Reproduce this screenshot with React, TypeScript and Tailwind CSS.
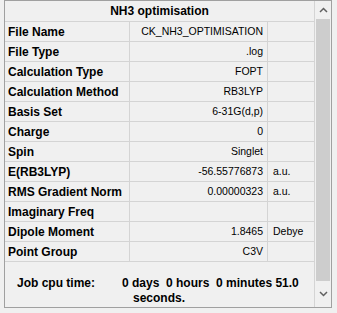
import React from "react";

const rows: [string, string, string][] = [
  ["File Name", "CK_NH3_OPTIMISATION", ""],
  ["File Type", ".log", ""],
  ["Calculation Type", "FOPT", ""],
  ["Calculation Method", "RB3LYP", ""],
  ["Basis Set", "6-31G(d,p)", ""],
  ["Charge", "0", ""],
  ["Spin", "Singlet", ""],
  ["E(RB3LYP)", "-56.55776873", "a.u."],
  ["RMS Gradient Norm", "0.00000323", "a.u."],
  ["Imaginary Freq", "", ""],
  ["Dipole Moment", "1.8465", "Debye"],
  ["Point Group", "C3V", ""],
];

export default function App() {
  return (
    <div
      className="w-[337px] h-[313px] bg-[#f0f0f0] pl-[4px] text-black"
      style={{ fontFamily: '"Liberation Sans", Arial, sans-serif' }}
    >
      <div className="w-[328px] h-[308px] border border-[#a0a0a0] flex">
        <div className="w-[309px] flex flex-col">
          <div className="h-[21px] border-b border-[#d4d4d4] flex items-center justify-center text-[12px] font-bold leading-none">
            NH3 optimisation
          </div>
          {rows.map(([l, v, u]) => (
            <div key={l} className="h-[20px] border-b border-[#d4d4d4] flex">
              <div className="w-[125px] border-r border-[#d4d4d4] pl-[3px] flex items-center text-[12px] font-bold leading-none whitespace-nowrap">
                {l}
              </div>
              <div className="w-[138px] border-r border-[#d4d4d4] pr-[4px] flex items-center justify-end text-[10.5px] leading-none whitespace-nowrap">
                {v}
              </div>
              <div className="flex-1 pl-[5px] flex items-center text-[10.5px] leading-none whitespace-nowrap">
                {u}
              </div>
            </div>
          ))}
          <div className="flex-1 pt-[14px] text-[12px] font-bold leading-[15px]">
            <div className="flex">
              <div className="w-[117px] pl-[12px]">Job cpu time:</div>
              <div className="whitespace-pre">0 days  0 hours  0 minutes 51.0</div>
            </div>
            <div className="pl-[128px]">seconds.</div>
          </div>
        </div>
        <div className="w-[17px] border-l border-[#d4d4d4] flex flex-col">
          <div className="h-[18px] flex items-center justify-center">
            <svg width="9" height="6" viewBox="0 0 9 6">
              <path d="M1 5 L4.5 1.5 L8 5" fill="none" stroke="#606060" strokeWidth="1.5" />
            </svg>
          </div>
          <div className="h-[262px] mx-[1px] bg-[#cdcdcd]" />
          <div className="flex-1 flex items-center justify-center">
            <svg width="9" height="6" viewBox="0 0 9 6">
              <path d="M1 1 L4.5 4.5 L8 1" fill="none" stroke="#606060" strokeWidth="1.5" />
            </svg>
          </div>
        </div>
      </div>
    </div>
  );
}
